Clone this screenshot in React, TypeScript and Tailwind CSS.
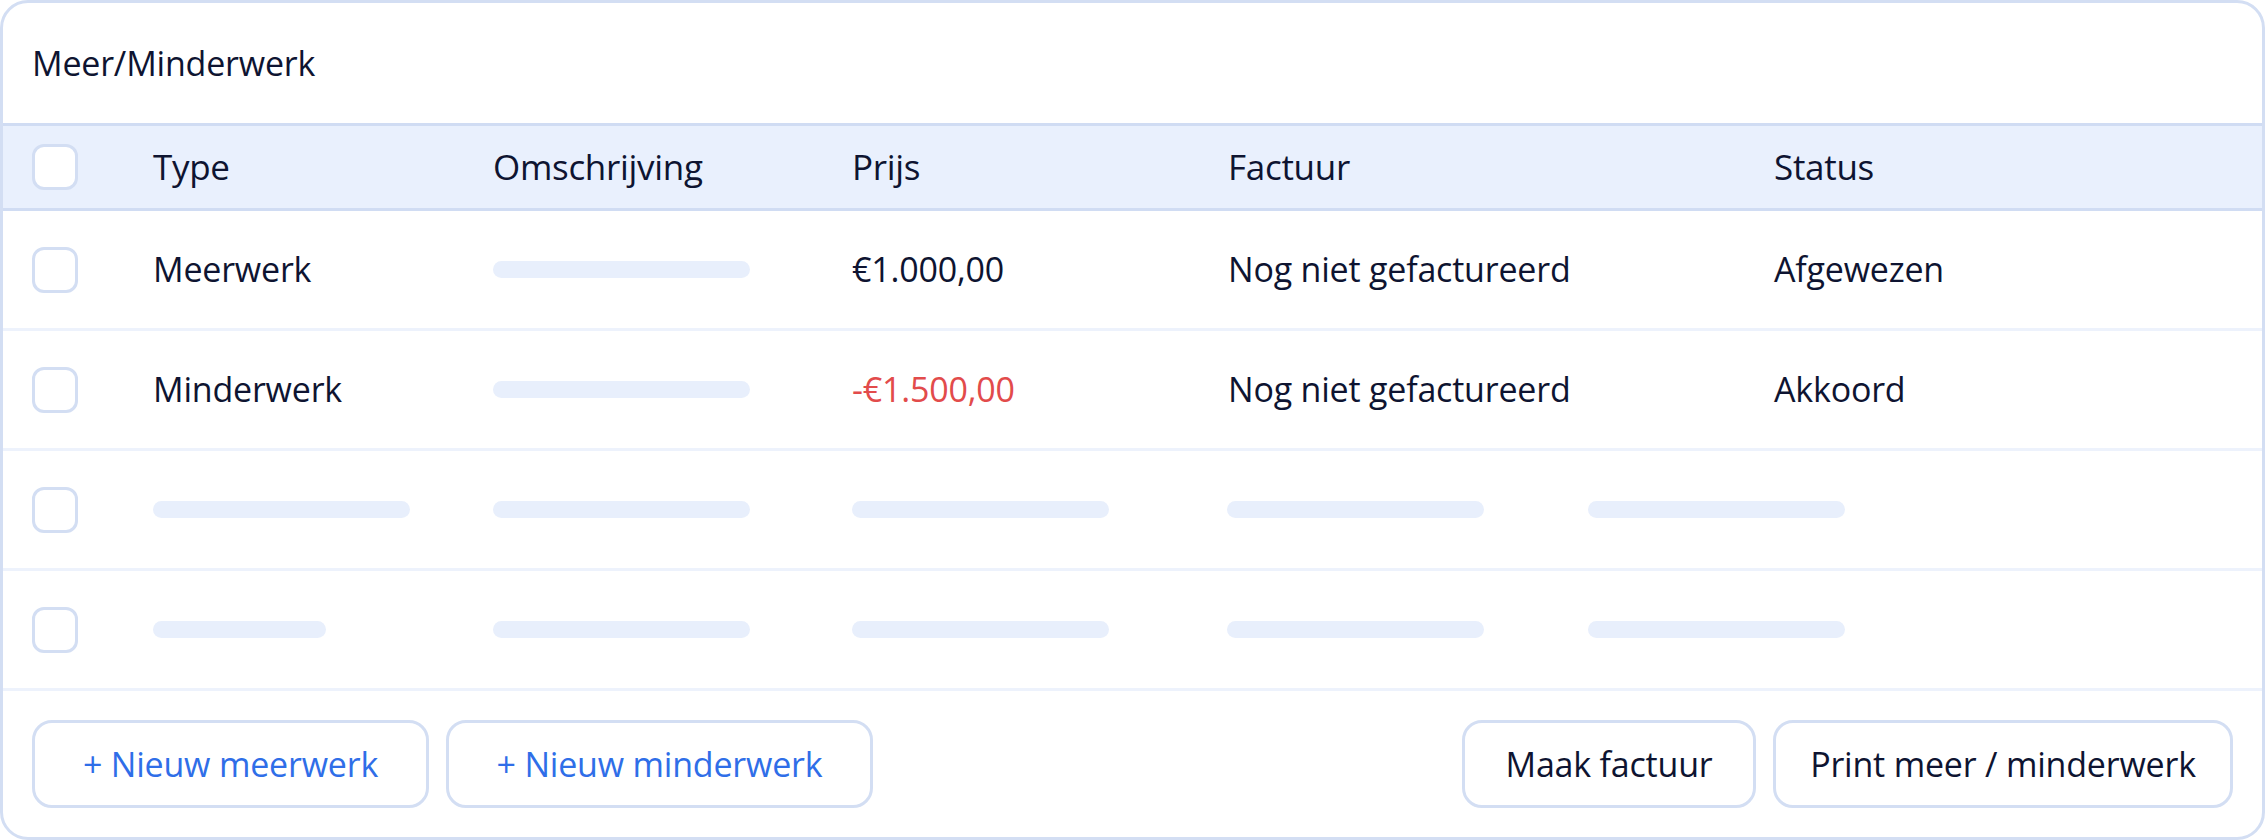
import React from 'react';

const cols = 'grid grid-cols-[121px_340px_359px_376px_546px_1fr] items-center pl-[29px]';
const skeletonCols = 'grid grid-cols-[121px_340px_359px_375px_361px_1fr] items-center pl-[29px]';

function Checkbox() {
  return <div className="w-[46px] h-[46px] rounded-[12px] border-[3px] border-[#d3def3] bg-white" />;
}

function Bar({ w = 'w-[257px]' }: { w?: string }) {
  return <div className={`${w} h-[17px] rounded-full bg-[#e8effc]`} />;
}

const rows = [
  { type: 'Meerwerk', price: '€1.000,00', negative: false, factuur: 'Nog niet gefactureerd', status: 'Afgewezen' },
  { type: 'Minderwerk', price: '-€1.500,00', negative: true, factuur: 'Nog niet gefactureerd', status: 'Akkoord' },
];

export default function App() {
  return (
    <div className="w-[2265px] h-[840px] bg-white" style={{ fontFamily: '"Open Sans", Lato, sans-serif' }}>
      <div className="h-full rounded-[28px] border-[3px] border-[#d3def3] overflow-hidden flex flex-col text-[#0e1431]">
        <div className="h-[120px] flex items-center px-[29px] text-[34px] tracking-[-0.2px]">Meer/Minderwerk</div>

        {/* header */}
        <div className={`${cols} h-[88px] bg-[#e9f0fd] border-y-[3px] border-[#d0dcf3] text-[35px] tracking-[-0.3px]`}>
          <Checkbox />
          <div>Type</div>
          <div>Omschrijving</div>
          <div>Prijs</div>
          <div>Factuur</div>
          <div>Status</div>
        </div>

        {rows.map((r) => (
          <div key={r.type} className={`${cols} h-[120px] border-b-[3px] border-[#edf2fc] text-[34px] tracking-[-0.2px]`}>
            <Checkbox />
            <div>{r.type}</div>
            <div><Bar /></div>
            <div className={r.negative ? 'text-[#e24b4b]' : ''}>{r.price}</div>
            <div>{r.factuur}</div>
            <div>{r.status}</div>
          </div>
        ))}

        {['w-[257px]', 'w-[173px]'].map((w, i) => (
          <div key={i} className={`${skeletonCols} h-[120px] border-b-[3px] border-[#edf2fc]`}>
            <Checkbox />
            <Bar w={w} />
            <Bar />
            <Bar />
            <Bar />
            <Bar />
          </div>
        ))}

        <div className="flex-1 flex items-center px-[29px] gap-[17px] text-[34px] tracking-[-0.2px]">
          <button className="w-[397px] h-[88px] rounded-[20px] border-[3px] border-[#d3def3] text-[#2f6ee8]">+ Nieuw meerwerk</button>
          <button className="w-[427px] h-[88px] rounded-[20px] border-[3px] border-[#d3def3] text-[#2f6ee8]">+ Nieuw minderwerk</button>
          <div className="flex-1" />
          <button className="w-[294px] h-[88px] rounded-[20px] border-[3px] border-[#d3def3]">Maak factuur</button>
          <button className="w-[460px] h-[88px] rounded-[20px] border-[3px] border-[#d3def3]">Print meer / minderwerk</button>
        </div>
      </div>
    </div>
  );
}
